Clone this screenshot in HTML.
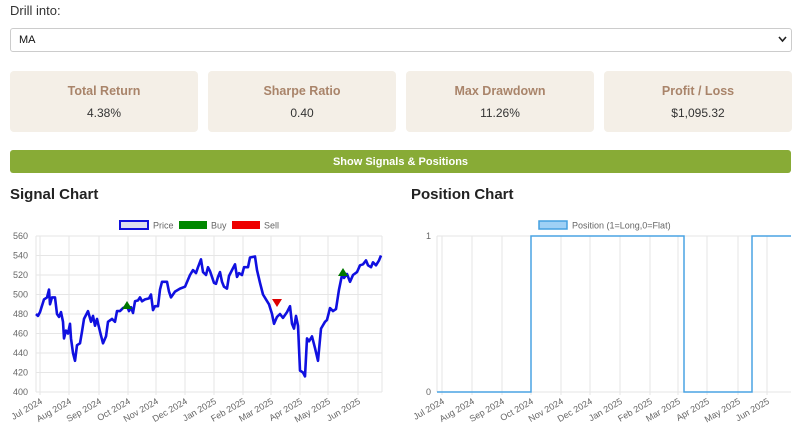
<!DOCTYPE html>
<html><head><meta charset="utf-8"><style>
body{margin:0;width:806px;height:439px;background:#fff;font-family:"Liberation Sans",sans-serif;position:relative;overflow:hidden}
.a{position:absolute}
.card{position:absolute;top:71px;width:188px;height:61px;background:#f4efe7;border-radius:4px;text-align:center}
.card b{display:block;margin-top:13px;color:#a9846a;font-size:12.5px}
.card span{display:block;margin-top:8px;color:#333;font-size:12px}
</style></head><body>
<div class="a" style="left:10px;top:3px;font-size:13px;color:#333">Drill into:</div>
<div class="a" style="left:10px;top:28px;width:780px;height:22px;border:1px solid #ccc;border-radius:3px;font-size:11px;line-height:22px;color:#111"><span style="margin-left:8px">MA</span>
<svg class="a" style="right:4px;top:7px" width="9" height="7"><path d="M1 1l3.5 4 3.5-4" stroke="#222" stroke-width="1.6" fill="none"/></svg></div>
<div class="card" style="left:10px"><b>Total Return</b><span>4.38%</span></div>
<div class="card" style="left:208px"><b>Sharpe Ratio</b><span>0.40</span></div>
<div class="card" style="left:406px"><b>Max Drawdown</b><span>11.26%</span></div>
<div class="card" style="left:604px"><b>Profit / Loss</b><span>$1,095.32</span></div>
<div class="a" style="left:10px;top:150px;width:781px;height:23px;background:#88ab36;border-radius:3px;color:#fff;font-weight:bold;font-size:11px;text-align:center;line-height:24px">Show Signals &amp; Positions</div>
<div class="a" style="left:10px;top:186px;font-weight:bold;font-size:15px;color:#222">Signal Chart</div>
<div class="a" style="left:411px;top:186px;font-weight:bold;font-size:15px;color:#222">Position Chart</div>
<svg class="a" style="left:0;top:0" width="806" height="439" font-family="Liberation Sans" font-size="9" fill="#666">
<g id="g1" stroke="#e6e6e6" stroke-width="1"></g>
<rect x="120" y="221" width="28" height="8" fill="#dde" stroke="#1010dd" stroke-width="2"/><text x="153" y="228.5">Price</text>
<rect x="179" y="221" width="28" height="8" fill="#080"/><text x="211" y="228.5">Buy</text>
<rect x="232" y="221" width="28" height="8" fill="#e00"/><text x="264" y="228.5">Sell</text>
<rect x="539" y="221" width="28" height="8" fill="#9fd0f5" stroke="#45a0e0" stroke-width="1.5"/><text x="572" y="228.5">Position (1=Long,0=Flat)</text>
<polyline id="pl" fill="none" stroke="#1010e0" stroke-width="2.6" stroke-linejoin="round"/>
<path d="M122 309l5-8 5 8z" fill="#070"/><path d="M272 299l5 8 5-8z" fill="#d00"/><path d="M338 276l5-8 5 8z" fill="#070"/>
<path d="M437 392H531V236H684V392H752V236H791" fill="none" stroke="#4aa3e3" stroke-width="1.5"/>
<text x="431" y="239" text-anchor="end">1</text><text x="431" y="395" text-anchor="end">0</text>
<g id="lb"></g>
</svg>
<script>
var s='http://www.w3.org/2000/svg',g=document.getElementById('g1'),lb=document.getElementById('lb');
function L(x1,y1,x2,y2){var l=document.createElementNS(s,'line');l.setAttribute('x1',x1);l.setAttribute('y1',y1);l.setAttribute('x2',x2);l.setAttribute('y2',y2);g.appendChild(l);}
function T(x,y,t,a){var e=document.createElementNS(s,'text');e.setAttribute('x',x);e.setAttribute('y',y);if(a)e.setAttribute('transform',a);e.setAttribute('text-anchor','end');e.textContent=t;lb.appendChild(e);}
for(var i=0;i<9;i++){var y=236+i*19.5;L(36,y,382,y);T(28,y+3,560-i*20);}
var m=['Jul 2024','Aug 2024','Sep 2024','Oct 2024','Nov 2024','Dec 2024','Jan 2025','Feb 2025','Mar 2025','Apr 2025','May 2025','Jun 2025'];
var v1=[40,69,99,128,156,185,214,243,271,300,328,358],v2=[442,472,502,531,561,590,620,650,678,707,738,767];
L(36,236,36,392);L(382,236,382,392);L(437,236,791,236);L(437,392,791,392);L(437,236,437,392);
for(i=0;i<12;i++){L(v1[i],236,v1[i],395);L(v2[i],236,v2[i],395);
T(v1[i]+3,403,m[i],'rotate(-30 '+(v1[i]+3)+' 403)');T(v2[i]+3,403,m[i],'rotate(-30 '+(v2[i]+3)+' 403)');}
var d=[36,480,38,478,40,482,44,495,47,497,49,505,50,490,52,497,55,497,57,480,59,477,61,482,63,472,64,455,66,463,68,460,70,470,71,455,73,440,75,432,77,448,80,450,82,462,84,475,88,483,91,472,93,478,95,468,97,475,100,462,103,450,106,457,108,472,112,475,115,472,117,483,120,483,123,486,127,488,129,483,131,487,133,481,135,493,138,494,140,497,142,493,145,495,149,496,151,500,153,484,155,488,158,488,160,505,162,513,167,513,169,503,171,497,175,503,180,506,185,508,190,520,193,525,196,522,198,528,201,536,203,523,206,520,208,528,210,524,214,512,216,511,218,518,220,523,222,513,224,508,227,506,229,519,232,525,235,531,237,518,239,522,242,520,244,528,248,528,250,538,255,539,257,525,260,512,263,500,266,495,269,490,272,480,274,470,277,477,280,480,283,476,287,482,290,488,292,470,294,465,296,478,298,468,300,422,303,420,305,416,307,455,309,452,312,457,315,445,318,432,321,465,325,472,327,474,330,486,333,483,336,485,339,505,342,520,344,517,347,521,350,513,353,520,357,523,360,530,363,531,366,535,368,530,371,528,373,533,376,530,379,535,381,540];
var p='';for(i=0;i<d.length;i+=2)p+=d[i]+','+(392-(d[i+1]-400)*0.975).toFixed(1)+' ';
document.getElementById('pl').setAttribute('points',p);
</script>
</body></html>
